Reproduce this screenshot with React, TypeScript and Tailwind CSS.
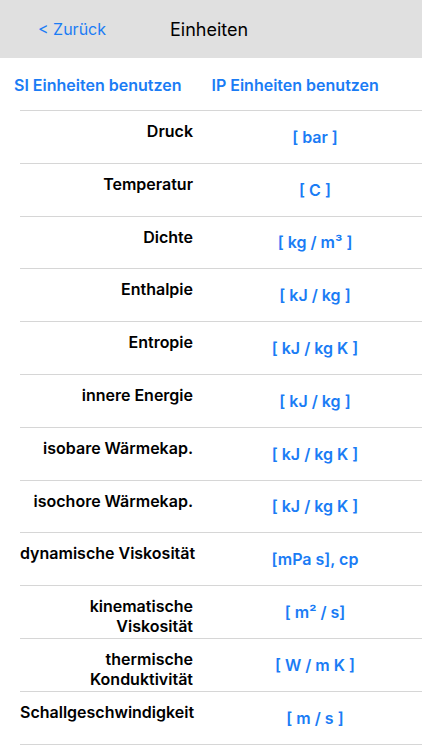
import React from 'react'

const rows: { label: string[]; unit: string }[] = [
  { label: ['Druck'], unit: '[ bar ]' },
  { label: ['Temperatur'], unit: '[ C ]' },
  { label: ['Dichte'], unit: '[ kg / m³ ]' },
  { label: ['Enthalpie'], unit: '[ kJ / kg ]' },
  { label: ['Entropie'], unit: '[ kJ / kg K ]' },
  { label: ['innere Energie'], unit: '[ kJ / kg ]' },
  { label: ['isobare Wärmekap.'], unit: '[ kJ / kg K ]' },
  { label: ['isochore Wärmekap.'], unit: '[ kJ / kg K ]' },
  { label: ['dynamische Viskosität'], unit: '[mPa s], cp' },
  { label: ['kinematische', 'Viskosität'], unit: '[ m² / s]' },
  { label: ['thermische', 'Konduktivität'], unit: '[ W / m K ]' },
  { label: ['Schallgeschwindigkeit'], unit: '[ m / s ]' },
]

export default function App() {
  return (
    <div
      className="w-[422px] h-[750px] overflow-hidden bg-white"
      style={{ fontFamily: 'Inter, "Noto Sans", sans-serif' }}
    >
      {/* Nav bar */}
      <div className="h-[58px] bg-[#e0e0e0] flex items-center pl-[38px]">
        <span className="text-[16px] text-[#1a7cf5] w-[132px]">&lt; Zurück</span>
        <span className="text-[18px] text-black">Einheiten</span>
      </div>

      {/* Unit system buttons */}
      <div className="h-[52px] flex items-center pl-[14px] pt-[2px] gap-[30px]">
        <span className="text-[16px] font-semibold text-[#1a7cf5]">SI Einheiten benutzen</span>
        <span className="text-[16px] font-semibold text-[#1a7cf5]">IP Einheiten benutzen</span>
      </div>

      {/* Table */}
      <div className="ml-[20px]">
        {rows.map((row, i) => (
          <div
            key={i}
            className="h-[52.8px] flex border-t border-[#d6d6d6]"
          >
            <div className="w-[173px] text-right pt-[10px] text-[16px] leading-[20px] font-semibold text-black whitespace-nowrap">
              {row.label.map((l) => (
                <div key={l}>{l}</div>
              ))}
            </div>
            <div className="flex-1 flex items-center justify-center pl-[15px] text-[16px] font-semibold text-[#1a7cf5]">
              {row.unit}
            </div>
          </div>
        ))}
        <div className="border-t border-[#d6d6d6]" />
      </div>
    </div>
  )
}
